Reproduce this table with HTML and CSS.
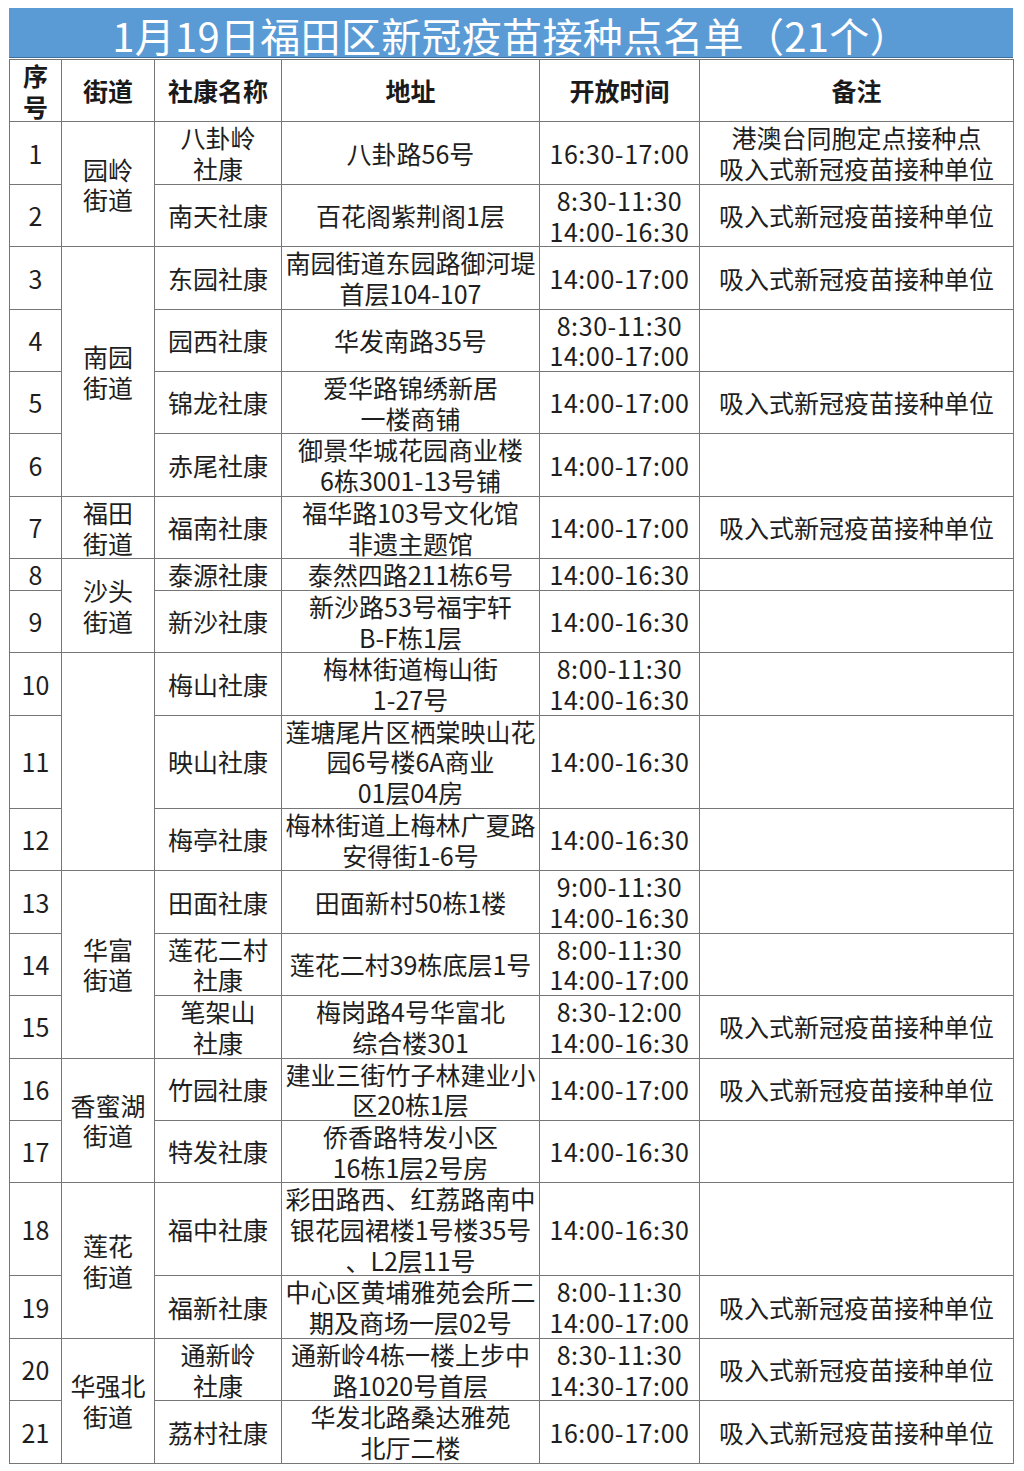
FILE: index.html
```html
<!DOCTYPE html>
<html lang="zh-CN">
<head>
<meta charset="utf-8">
<title>1月19日福田区新冠疫苗接种点名单</title>
<link rel="stylesheet" href="styles.css">
</head>
<body>
<div class="sheet">
  <div class="title">1月19日福田区新冠疫苗接种点名单（21个）</div>
  <table class="grid">
    <colgroup>
      <col class="c-no"><col class="c-street"><col class="c-name"><col class="c-addr"><col class="c-time"><col class="c-note">
    </colgroup>
    <thead>
      <tr><th>序<br>号</th><th>街道</th><th>社康名称</th><th>地址</th><th>开放时间</th><th>备注</th></tr>
    </thead>
    <tbody>
      <tr><td>1</td><td rowspan="2">园岭<br>街道</td><td>八卦岭<br>社康</td><td>八卦路56号</td><td class="t">16:30-17:00</td><td>港澳台同胞定点接种点<br>吸入式新冠疫苗接种单位</td></tr>
      <tr><td>2</td><td>南天社康</td><td>百花阁紫荆阁1层</td><td class="t">8:30-11:30<br>14:00-16:30</td><td>吸入式新冠疫苗接种单位</td></tr>
      <tr><td>3</td><td rowspan="4">南园<br>街道</td><td>东园社康</td><td>南园街道东园路御河堤<br>首层104-107</td><td class="t">14:00-17:00</td><td>吸入式新冠疫苗接种单位</td></tr>
      <tr><td>4</td><td>园西社康</td><td>华发南路35号</td><td class="t">8:30-11:30<br>14:00-17:00</td><td></td></tr>
      <tr><td>5</td><td>锦龙社康</td><td>爱华路锦绣新居<br>一楼商铺</td><td class="t">14:00-17:00</td><td>吸入式新冠疫苗接种单位</td></tr>
      <tr><td>6</td><td>赤尾社康</td><td>御景华城花园商业楼<br>6栋3001-13号铺</td><td class="t">14:00-17:00</td><td></td></tr>
      <tr><td>7</td><td>福田<br>街道</td><td>福南社康</td><td>福华路103号文化馆<br>非遗主题馆</td><td class="t">14:00-17:00</td><td>吸入式新冠疫苗接种单位</td></tr>
      <tr><td>8</td><td rowspan="2">沙头<br>街道</td><td>泰源社康</td><td>泰然四路211栋6号</td><td class="t">14:00-16:30</td><td></td></tr>
      <tr><td>9</td><td>新沙社康</td><td>新沙路53号福宇轩<br>B-F栋1层</td><td class="t">14:00-16:30</td><td></td></tr>
      <tr><td>10</td><td rowspan="3"></td><td>梅山社康</td><td>梅林街道梅山街<br>1-27号</td><td class="t">8:00-11:30<br>14:00-16:30</td><td></td></tr>
      <tr><td>11</td><td>映山社康</td><td>莲塘尾片区栖棠映山花<br>园6号楼6A商业<br>01层04房</td><td class="t">14:00-16:30</td><td></td></tr>
      <tr><td>12</td><td>梅亭社康</td><td>梅林街道上梅林广夏路<br>安得街1-6号</td><td class="t">14:00-16:30</td><td></td></tr>
      <tr><td>13</td><td rowspan="3">华富<br>街道</td><td>田面社康</td><td>田面新村50栋1楼</td><td class="t">9:00-11:30<br>14:00-16:30</td><td></td></tr>
      <tr><td>14</td><td>莲花二村<br>社康</td><td>莲花二村39栋底层1号</td><td class="t">8:00-11:30<br>14:00-17:00</td><td></td></tr>
      <tr><td>15</td><td>笔架山<br>社康</td><td>梅岗路4号华富北<br>综合楼301</td><td class="t">8:30-12:00<br>14:00-16:30</td><td>吸入式新冠疫苗接种单位</td></tr>
      <tr><td>16</td><td rowspan="2">香蜜湖<br>街道</td><td>竹园社康</td><td>建业三街竹子林建业小<br>区20栋1层</td><td class="t">14:00-17:00</td><td>吸入式新冠疫苗接种单位</td></tr>
      <tr><td>17</td><td>特发社康</td><td>侨香路特发小区<br>16栋1层2号房</td><td class="t">14:00-16:30</td><td></td></tr>
      <tr><td>18</td><td rowspan="2">莲花<br>街道</td><td>福中社康</td><td>彩田路西、红荔路南中<br>银花园裙楼1号楼35号<br>、L2层11号</td><td class="t">14:00-16:30</td><td></td></tr>
      <tr><td>19</td><td>福新社康</td><td>中心区黄埔雅苑会所二<br>期及商场一层02号</td><td class="t">8:00-11:30<br>14:00-17:00</td><td>吸入式新冠疫苗接种单位</td></tr>
      <tr><td>20</td><td rowspan="2">华强北<br>街道</td><td>通新岭<br>社康</td><td>通新岭4栋一楼上步中<br>路1020号首层</td><td class="t">8:30-11:30<br>14:30-17:00</td><td>吸入式新冠疫苗接种单位</td></tr>
      <tr><td>21</td><td>荔村社康</td><td>华发北路桑达雅苑<br>北厅二楼</td><td class="t">16:00-17:00</td><td>吸入式新冠疫苗接种单位</td></tr>
    </tbody>
  </table>
</div>
</body>
</html>
```

FILE: styles.css
```css
html, body {
  margin: 0;
  padding: 0;
  background: #ffffff;
}
body {
  font-family: "Noto Sans CJK SC", "Noto Sans", sans-serif;
  color: #1e1e1e;
}
.sheet {
  width: 1004px;
  padding: 8px 0 0 9px;
}
.title {
  height: 50px;
  box-sizing: border-box;
  background: #5b9bd5;
  color: #ffffff;
  font-size: 40px;
  line-height: 46px;
  padding-top: 4px;
  text-align: center;
  letter-spacing: 0.3px;
  border-bottom: 1px solid #3e6f9c;
  white-space: nowrap;
}
.grid {
  width: 1004px;
  border-collapse: collapse;
  table-layout: fixed;
  margin-top: 1px;
}
.c-no { width: 52px; }
.c-street { width: 93px; }
.c-name { width: 127px; }
.c-addr { width: 258px; }
.c-time { width: 160px; }
.c-note { width: 314px; }
.grid th,
.grid td {
  border: 1px solid #767676;
  padding: 0;
  text-align: center;
  vertical-align: middle;
  font-size: 25px;
  line-height: 30.7px;
  white-space: nowrap;
}
.grid th {
  font-weight: bold;
  color: #1a1a1a;
}
.grid td.t {
  letter-spacing: 0.6px;
}
```
